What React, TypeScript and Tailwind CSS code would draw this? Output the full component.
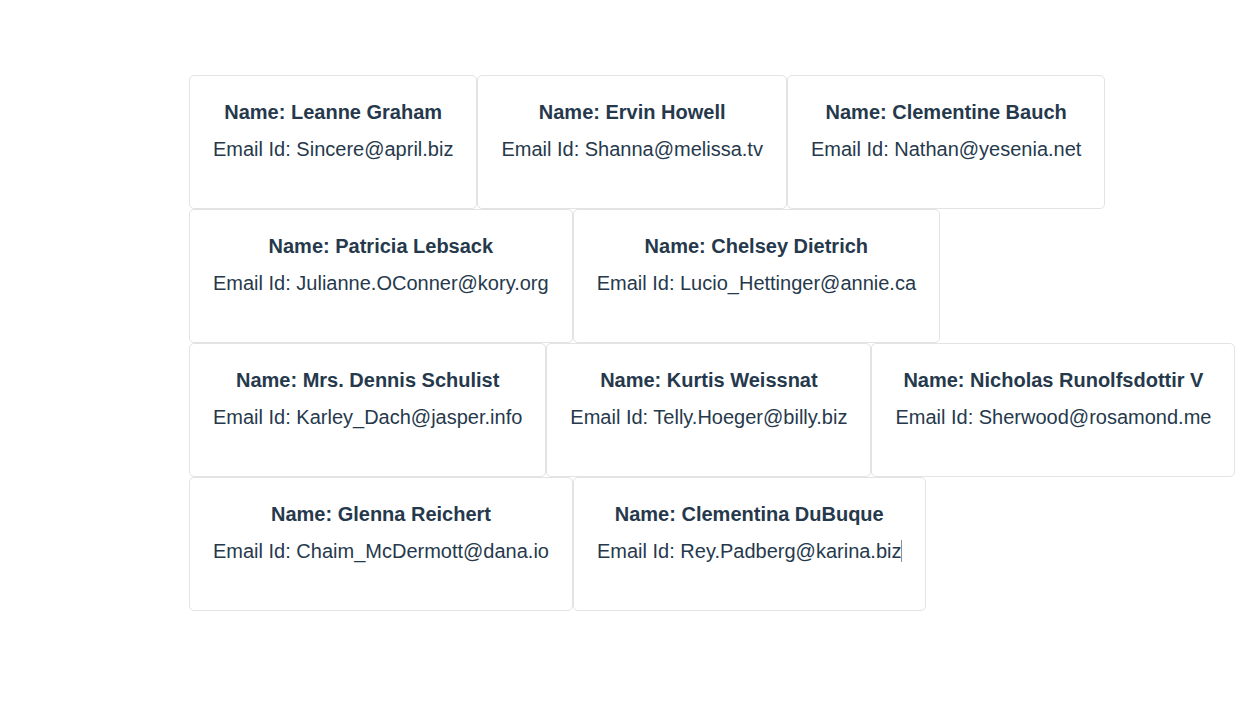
type User = { name: string; email: string; caret?: boolean };

const rows: User[][] = [
  [
    { name: "Leanne Graham", email: "Sincere@april.biz" },
    { name: "Ervin Howell", email: "Shanna@melissa.tv" },
    { name: "Clementine Bauch", email: "Nathan@yesenia.net" },
  ],
  [
    { name: "Patricia Lebsack", email: "Julianne.OConner@kory.org" },
    { name: "Chelsey Dietrich", email: "Lucio_Hettinger@annie.ca" },
  ],
  [
    { name: "Mrs. Dennis Schulist", email: "Karley_Dach@jasper.info" },
    { name: "Kurtis Weissnat", email: "Telly.Hoeger@billy.biz" },
    { name: "Nicholas Runolfsdottir V", email: "Sherwood@rosamond.me" },
  ],
  [
    { name: "Glenna Reichert", email: "Chaim_McDermott@dana.io" },
    { name: "Clementina DuBuque", email: "Rey.Padberg@karina.biz", caret: true },
  ],
];

function UserCard({ name, email, caret }: User) {
  return (
    <article className="shrink-0 rounded-[5px] border border-[#e3e3e4] px-[23px] pt-6 pb-[47px] text-center text-[20px] whitespace-nowrap">
      <h2 className="leading-[25px] font-bold">Name: {name}</h2>
      <p className="relative mt-[13px] leading-[23px]">
        Email Id: {email}
        {caret && <span className="absolute top-0 right-0 h-[22px] w-px bg-[#89929b]" />}
      </p>
    </article>
  );
}

export default function App() {
  return (
    <main className="min-h-screen bg-white pt-[75px] pl-[15%] font-['Liberation_Sans',Arial,sans-serif] text-[#26394c]">
      {rows.map((row) => (
        <div key={row[0].name} className="flex">
          {row.map((user) => (
            <UserCard key={user.name} {...user} />
          ))}
        </div>
      ))}
    </main>
  );
}
